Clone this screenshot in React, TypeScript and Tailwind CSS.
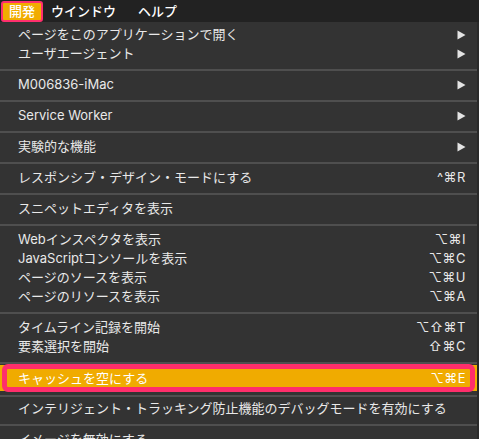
import React from 'react';

type Item = { label: string; shortcut?: string; submenu?: boolean };

// groups between separators
const groups: Item[][] = [
  [
    { label: 'ページをこのアプリケーションで開く', submenu: true },
    { label: 'ユーザエージェント', submenu: true },
  ],
  [{ label: 'M006836-iMac', submenu: true }],
  [{ label: 'Service Worker', submenu: true }],
  [{ label: '実験的な機能', submenu: true }],
  [{ label: 'レスポンシブ・デザイン・モードにする', shortcut: '^⌘R' }],
  [{ label: 'スニペットエディタを表示' }],
  [
    { label: 'Webインスペクタを表示', shortcut: '⌥⌘I' },
    { label: 'JavaScriptコンソールを表示', shortcut: '⌥⌘C' },
    { label: 'ページのソースを表示', shortcut: '⌥⌘U' },
    { label: 'ページのリソースを表示', shortcut: '⌥⌘A' },
  ],
  [
    { label: 'タイムライン記録を開始', shortcut: '⌥⇧⌘T' },
    { label: '要素選択を開始', shortcut: '⇧⌘C' },
  ],
];

const tail: Item[][] = [
  [{ label: 'インテリジェント・トラッキング防止機能のデバッグモードを有効にする' }],
  [
    { label: 'イメージを無効にする' },
    { label: 'スタイルを無効にする' },
    { label: 'JavaScriptを無効にする' },
  ],
];

const Arrow = () => (
  <svg width="9" height="10" viewBox="0 0 9 10" className="shrink-0">
    <polygon points="0.5,0.5 8.5,5 0.5,9.5" fill="#e4e4e4" />
  </svg>
);

const Row = ({ item }: { item: Item }) => (
  <div className="flex h-[19px] items-center justify-between whitespace-nowrap pl-[18px] pr-[11px]">
    <span>{item.label}</span>
    {item.submenu && <Arrow />}
    {item.shortcut && <span className="tracking-[0.5px]">{item.shortcut}</span>}
  </div>
);

const Separator = ({ top = 6, bottom = 4 }: { top?: number; bottom?: number }) => (
  <div style={{ paddingTop: top, paddingBottom: bottom }}>
    <div className="h-[2px] bg-[#4f4f4f]" />
  </div>
);

export default function App() {
  return (
    <div
      className="h-[439px] w-[479px] overflow-hidden bg-[#2a2a2a] text-[13px] leading-[19px] text-[#e9e9e9]"
      style={{ fontFamily: 'Inter, "Noto Sans CJK JP", sans-serif' }}
    >
      {/* Menu bar */}
      <div className="flex h-[22px] w-full items-center whitespace-nowrap bg-[#222222] text-[13px] font-medium text-white">
        <div className="ml-px mt-[1px] flex h-[21px] w-[42px] items-center justify-center rounded-[3px] border-2 border-[#ff2f6d] bg-[#f1ac00]">
          開発
        </div>
        <span className="ml-[8px]">ウインドウ</span>
        <span className="ml-[22px]">ヘルプ</span>
      </div>

      {/* Dropdown menu */}
      <div className="w-[477px] bg-[#333333] pt-[3px]">
        {groups.map((g, i) => (
          <React.Fragment key={i}>
            {i > 0 && <Separator />}
            {g.map((item) => (
              <Row key={item.label} item={item} />
            ))}
          </React.Fragment>
        ))}

        <Separator bottom={0} />

        {/* Highlighted item with annotation frame */}
        <div className="relative h-[28px] py-px">
          <div className="flex h-[26px] items-center justify-between whitespace-nowrap bg-[#f0ab00] pl-[18px] pr-[11px] text-white">
            <span>キャッシュを空にする</span>
            <span className="tracking-[0.5px]">⌥⌘E</span>
          </div>
          <div className="pointer-events-none absolute inset-y-0 left-[2px] right-[2px] rounded-[6px] border-[5px] border-[#ff2e6b]" />
        </div>

        <Separator top={3} bottom={2} />

        {tail.map((g, i) => (
          <React.Fragment key={i}>
            {i > 0 && <Separator />}
            {g.map((item) => (
              <Row key={item.label} item={item} />
            ))}
          </React.Fragment>
        ))}
      </div>
    </div>
  );
}
